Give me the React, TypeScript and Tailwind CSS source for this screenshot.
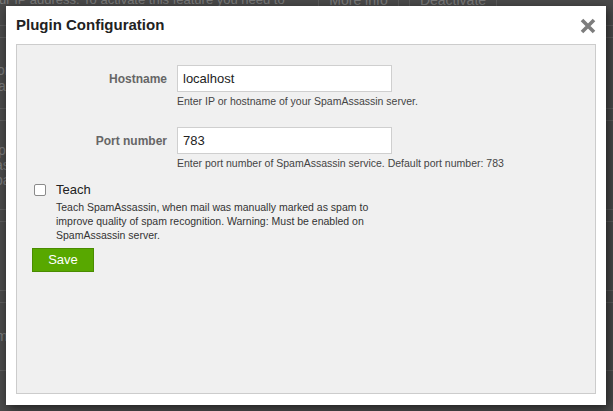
import React from "react";

function BgRow({ h, children }: { h: string; children?: React.ReactNode }) {
  return <div className={`${h} border-b border-[#5c5c5c] flex flex-col justify-center`}>{children}</div>;
}

export default function App() {
  return (
    <div className="relative w-[613px] h-[411px] overflow-hidden bg-[#4a4a4a] font-['Liberation_Sans',Arial,sans-serif]">
      {/* background page under overlay */}
      <div className="absolute inset-0 flex flex-col text-[#7a7a7a] text-[14px]">
        <div className="h-[36px] border-b border-[#5c5c5c] flex items-start -mt-[10px] pt-0">
          <span className="w-[319px] whitespace-nowrap overflow-hidden text-[13px] -ml-[1px]">ur IP address. To activate this feature you need to</span>
          <span className="w-[81px] h-[26px] border-x border-[#5c5c5c] text-center text-[14px]">More info</span>
          <span className="w-[10px]"></span>
          <span className="w-[88px] h-[26px] border-x border-[#5c5c5c] text-center text-[14px]">Deactivate</span>
        </div>
        <BgRow h="h-[12px]" />
        <div className="h-[71px] border-b border-[#5c5c5c] flex flex-col justify-center leading-[16px] pt-[10px]">
          <span className="-ml-[3px]">on</span>
          <span className="-ml-[2px]">a</span>
        </div>
        <BgRow h="h-[12px]" />
        <div className="h-[89px] border-b border-[#5c5c5c] flex flex-col justify-center leading-[15px]">
          <span className="-ml-[2px]">p</span>
          <span className="-ml-[5px]">as</span>
          <span className="-ml-[5px]">pa</span>
        </div>
        <BgRow h="h-[12px]" />
        <BgRow h="h-[69px]" />
        <BgRow h="h-[12px]" />
        <div className="h-[68px] border-b border-[#5c5c5c] flex flex-col justify-center">
          <span className="-ml-[4px]">m</span>
        </div>
      </div>

      {/* modal */}
      <div className="absolute left-[6px] top-[6px] w-[600px] h-[399px] bg-white flex flex-col shadow-[2px_3px_10px_rgba(0,0,0,0.6)]">
        <div className="h-[38px] flex items-center justify-between pl-[10px] pr-[10px]">
          <span className="text-[15px] font-bold text-[#222] pt-[1px]">Plugin Configuration</span>
          <svg width="16" height="16" viewBox="0 0 16 16" className="mt-[1px]">
            <path d="M2 2 L14 14 M14 2 L2 14" stroke="#7d7d7d" strokeWidth="3.6" strokeLinecap="butt" />
          </svg>
        </div>
        <div className="mx-[10px] h-[350px] bg-[#f0f0f0] border border-[#cccccc] flex flex-col">
          <div className="grid grid-cols-[150px_1fr] gap-x-[10px] mt-[20px]">
            <label className="text-right text-[12px] font-bold text-[#666] h-[27px] flex items-center justify-end">Hostname</label>
            <div className="flex flex-col">
              <div className="w-[215px] h-[27px] bg-white border border-[#cfcfcf] flex items-center pl-[5px] text-[13px] text-[#222]">localhost</div>
              <span className="text-[10.5px] text-[#444] mt-[2px] leading-[14px]">Enter IP or hostname of your SpamAssassin server.</span>
            </div>
            <label className="text-right text-[12px] font-bold text-[#666] h-[27px] flex items-center justify-end mt-[19px]">Port number</label>
            <div className="flex flex-col mt-[19px]">
              <div className="w-[215px] h-[27px] bg-white border border-[#cfcfcf] flex items-center pl-[5px] text-[13px] text-[#222]">783</div>
              <span className="text-[10.5px] text-[#444] mt-[2px] leading-[14px]">Enter port number of SpamAssassin service. Default port number: 783</span>
            </div>
          </div>
          <div className="flex items-center mt-[10px] ml-[17px]">
            <span className="w-[12px] h-[12px] bg-white border border-[#8a8a8a] rounded-[2px]"></span>
            <span className="ml-[10px] text-[13px] text-[#222]">Teach</span>
          </div>
          <p className="ml-[39px] mt-[0px] w-[335px] text-[10.5px] leading-[14px] text-[#333]">
            Teach SpamAssassin, when mail was manually marked as spam to improve quality of spam recognition. Warning: Must be enabled on SpamAssassin server.
          </p>
          <div className="ml-[15px] mt-[6px]">
            <button className="w-[62px] h-[24px] bg-[#58a800] border border-[#4a8c00] text-white text-[13px] flex items-center justify-center">Save</button>
          </div>
        </div>
      </div>
    </div>
  );
}
